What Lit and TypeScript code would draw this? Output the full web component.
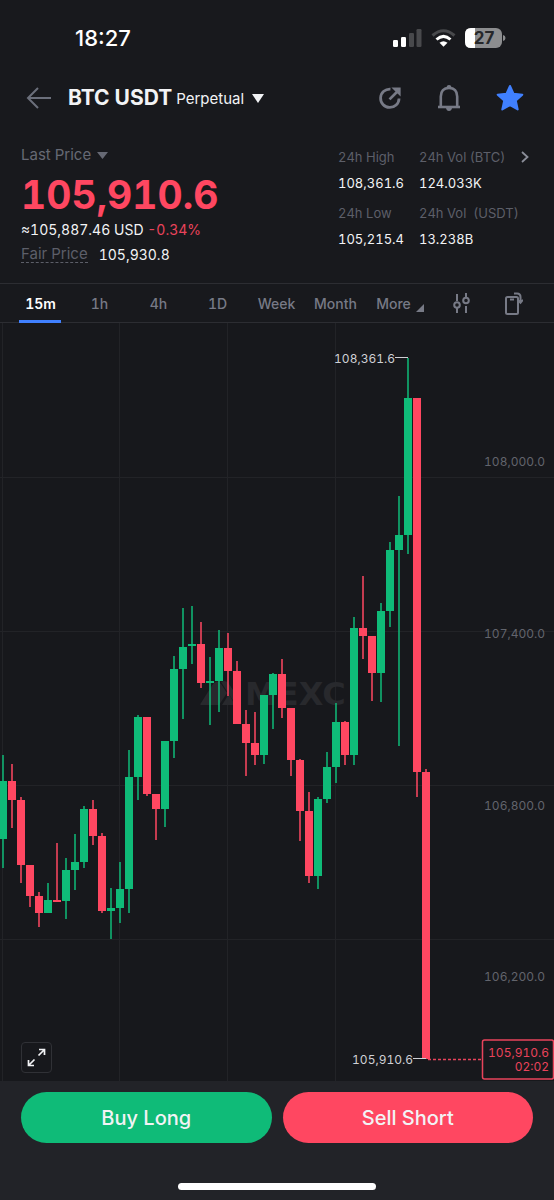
import { LitElement, html, svg, css } from "lit";
import { customElement, state } from "lit/decorators.js";
import { classMap } from "lit/directives/class-map.js";

// [rising, body top, body bottom, wick top, wick bottom] in chart units
type Candle = [number, number, number, number, number];

const CANDLES: Candle[] = [
  [1, 458, 516, 432, 545], [0, 458, 477, 441, 505], [0, 477, 542, 474, 560], [0, 542, 573, 542, 584],
  [0, 573, 590, 569, 604], [1, 577, 590, 560, 590], [0, 577, 579, 520, 579], [1, 547, 578, 535, 596],
  [1, 539, 547, 511, 567], [1, 486, 539, 483, 545], [0, 486, 513, 477, 522], [0, 513, 588, 510, 590],
  [1, 585, 588, 565, 616], [1, 566, 585, 539, 600], [1, 454, 566, 427, 590], [1, 394, 454, 392, 477],
  [0, 394, 471, 394, 473], [0, 471, 486, 471, 517], [1, 418, 486, 418, 504], [1, 346, 418, 333, 435],
  [1, 324, 346, 285, 396], [1, 321, 323, 283, 341], [0, 321, 360, 299, 365], [1, 358, 360, 334, 402],
  [1, 325, 358, 307, 389], [0, 325, 348, 310, 373], [0, 348, 401, 338, 401], [0, 401, 420, 387, 453],
  [0, 420, 432, 389, 442], [1, 372, 432, 372, 441], [1, 351, 372, 350, 406], [0, 351, 385, 336, 395],
  [0, 385, 437, 385, 453], [0, 437, 488, 436, 518], [0, 488, 553, 469, 560], [1, 476, 553, 474, 566],
  [1, 444, 476, 429, 480], [1, 399, 444, 380, 460], [0, 399, 432, 398, 442], [1, 305, 432, 294, 442],
  [0, 305, 313, 253, 336], [0, 313, 350, 313, 378], [1, 288, 350, 280, 379], [1, 227, 288, 219, 304],
  [1, 212, 227, 173, 423], [1, 75, 212, 35, 231], [0, 75, 449, 75, 474], [0, 449, 736, 446, 736],
];

const AXIS = [
  { y: 143, label: "108,000.0" },
  { y: 315, label: "107,400.0" },
  { y: 487, label: "106,800.0" },
  { y: 658, label: "106,200.0" },
];

@customElement("price-chart")
class PriceChart extends LitElement {
  static styles = css`
    :host { display: block; position: relative; background: #17181c; }
    .plot {
      display: block; width: 100%; height: auto;
      font-family: Inter, "Liberation Sans", sans-serif; font-size: 12px; font-variant-numeric: tabular-nums;
    }
    .grid { stroke: #222327; stroke-width: 1; }
    .up { fill: #0fbb78; }
    .down { fill: #ff4761; }
    .axis { fill: #62646c; text-anchor: end; }
    .mark { fill: #cfd0d5; text-anchor: end; }
    .lead { stroke: #cfd0d5; stroke-width: 1; }
    .last-line { stroke: #e9435b; stroke-width: 1.5; stroke-dasharray: 3 2; }
    .tag { fill: #17181c; stroke: #e9435b; stroke-width: 1.5; }
    .tag-text { fill: #e9435b; text-anchor: end; }
    .brand { fill: #28292d; }
    .brand-name { font: 700 32px "DejaVu Sans", sans-serif; }
    .expand {
      position: absolute; left: 21px; bottom: 8px; width: 31px; height: 31px; padding: 0;
      display: grid; place-items: center; background: #17181c;
      border: 1px solid #303136; border-radius: 4px; color: #f2f3f5;
    }
  `;

  render() {
    return html`
      <svg class="plot" viewBox="0 0 554 758" role="img" aria-label="BTC USDT 15 minute candles">
        ${[3, 120, 228, 336].map((x) => svg`<line class="grid" x1=${x - 0.5} x2=${x - 0.5} y1="0" y2="758"></line>`)}
        ${[154, 308, 462, 616].map((y) => svg`<line class="grid" x1="0" x2="554" y1=${y + 0.5} y2=${y + 0.5}></line>`)}
        <g class="brand">
          <path d="M201 380 L213 361 Q217 356 221 361 L227 370 L219 382 H202 Q199 382 201 380Z"></path>
          <path d="M222 382 L229 371 L235 382Z"></path>
          <path d="M221 359 Q226 356 229 361 L241 379 Q242 382 238 382 H236Z"></path>
          <text class="brand-name" x="245" y="382">MEXC</text>
        </g>
        ${CANDLES.map(([up, top, bottom, high, low], i) => {
          const x = 3 + i * 9;
          return svg`<g class=${up ? "up" : "down"}>
            <rect x=${x - 0.75} y=${high} width="1.5" height=${low - high}></rect>
            <rect x=${x - 4} y=${top} width="8" height=${bottom - top}></rect>
          </g>`;
        })}
        ${AXIS.map((a) => svg`<text class="axis" x="545" y=${a.y}>${a.label}</text>`)}
        <text class="mark" x="395" y="40">108,361.6</text>
        <line class="lead" x1="395" x2="408" y1="34.5" y2="34.5"></line>
        <text class="mark" x="413" y="741">105,910.6</text>
        <line class="lead" x1="413" x2="426" y1="735.5" y2="735.5"></line>
        <line class="last-line" x1="428" x2="482" y1="736.5" y2="736.5"></line>
        <rect class="tag" x="482.5" y="717" width="71" height="39" rx="2"></rect>
        <text class="tag-text" x="549" y="734">105,910.6</text>
        <text class="tag-text" x="549" y="748">02:02</text>
      </svg>
      <button class="expand" aria-label="Full screen">
        <svg width="19" height="19" viewBox="0 0 19 19" fill="none" stroke="currentColor" stroke-width="1.7">
          <path d="M11.5 7.500 L17 2 M12 1.500 H17.500 V7 M7.500 11.500 L2 17 M1.500 12 V17.500 H7"></path>
        </svg>
      </button>
    `;
  }
}

@customElement("app-root")
class AppRoot extends LitElement {
  @state() private range = "15m";

  static styles = css`
    :host {
      display: flex; flex-direction: column; min-height: 100vh; background: #18191d; color: #f2f3f5;
      font-family: Inter, "Liberation Sans", sans-serif; font-size: 13px;
    }
    button { font: inherit; color: inherit; background: none; border: 0; padding: 0; margin: 0; cursor: pointer; }
    svg { display: block; }
    .status { display: flex; justify-content: space-between; align-items: center; height: 75px; padding: 0 48px 0 75px; }
    .clock { font-size: 22px; font-weight: 500; line-height: 28px; color: #fff; }
    .signals { display: flex; align-items: center; gap: 9px; }
    .battery-text { font: 700 17px Inter, sans-serif; fill: #26272a; text-anchor: middle; }
    .title { display: flex; align-items: center; height: 46px; padding: 0 30px 0 26px; }
    .back { margin-right: 16px; color: #6b6f7b; }
    .pair { margin: 0; font-size: 21px; font-weight: 700; line-height: 28px; }
    .kind { display: flex; align-items: center; gap: 8px; margin-left: 4px; font-size: 15px; }
    .tools { display: flex; align-items: center; gap: 35px; margin-left: auto; color: #777a86; }
    .tools button { display: block; }
    .summary { display: flex; justify-content: space-between; padding: 24px 21px 17px; font-variant-numeric: tabular-nums; }
    .muted { color: #5d5f69; }
    .last { display: flex; align-items: center; gap: 6px; line-height: 20px; font-size: 15px; color: #666974; }
    .price { margin: 9px 0 2px; font-size: 39px; font-weight: 700; line-height: 42px; color: #ff4761; }
    .line { line-height: 24px; font-size: 14px; }
    .drop { color: #e9435b; }
    .fair { display: flex; align-items: center; gap: 11px; height: 24px; font-size: 14px; }
    .fair-label { line-height: 16px; font-size: 15px; border-bottom: 1px dashed #5d5f69; color: #5d5f69; }
    .stats { display: grid; grid-template-columns: 81px 1fr auto; flex: 0 0 195px; align-content: start; margin: 0; }
    .stat { display: flex; flex-direction: column; gap: 2px; margin-bottom: 6px; line-height: 24px; white-space: nowrap; }
    .more-stats { grid-column: 3; grid-row: 1; align-self: start; height: 24px; margin-right: 4px; color: #8b8e99; }
    .ranges {
      display: grid; grid-template-columns: 59fr 59fr 59fr 59fr 59fr 59fr 70fr 52fr 54fr;
      height: 38px; padding: 0 13px 0 11px; border: 1px solid #2c2d32; border-width: 1px 0; color: #777a86;
      font-size: 14px; font-weight: 500; font-variant-numeric: tabular-nums;
    }
    .ranges button { display: flex; align-items: center; justify-content: center; gap: 5px; position: relative; }
    .ranges .on { color: #fff; font-weight: 600; }
    .on::after { content: ""; position: absolute; left: 8px; right: 9px; bottom: -1px; height: 3px; background: #4080ff; }
    .corner { align-self: flex-end; margin-bottom: 10px; }
    .actions { flex: 1; display: flex; flex-direction: column; justify-content: space-between; padding: 11px 21px 10px; background: #222328; }
    .pair-actions { display: grid; grid-template-columns: 1fr 1fr; gap: 11px; }
    .act { height: 51px; border-radius: 26px; font-size: 20px; font-weight: 500; }
    .buy { background: #0fbb78; }
    .sell { background: #ff4761; }
    .home { width: 198px; height: 7px; margin: 0 auto; border-radius: 4px; background: #fff; }
  `;

  render() {
    const ranges = ["15m", "1h", "4h", "1D", "Week", "Month"];
    return html`
      <div class="status">
        <time class="clock">18:27</time>
        <div class="signals">
          <svg width="29" height="18" viewBox="0 0 29 18" fill="#fff">
            <rect x="0" y="11" width="5" height="7" rx="1.2"></rect>
            <rect x="8" y="8" width="5" height="10" rx="1.2"></rect>
            <rect x="16" y="4" width="5" height="14" rx="1.2" fill="#48494c"></rect>
            <rect x="23.500" y="0" width="5" height="18" rx="1.2" fill="#48494c"></rect>
          </svg>
          <svg width="25" height="18" viewBox="0 0 25 18" fill="none" stroke-width="3">
            <path d="M1.500 6.500 Q12.500 -3 23.500 6.500" stroke="#48494c"></path>
            <path d="M5.500 10.500 Q12.500 4.200 19.500 10.500" stroke="#fff"></path>
            <path d="M8.500 13.800 Q12.500 10.800 16.500 13.800 L12.500 17.700Z" fill="#fff"></path>
          </svg>
          <svg width="41" height="20" viewBox="0 0 41 20">
            <rect x="0" y="0" width="37" height="20" rx="6" fill="#8c8d8f"></rect>
            <path d="M6 0 H10 V20 H6 Q0 20 0 14 V6 Q0 0 6 0Z" fill="#fff"></path>
            <path d="M38 7 Q40.500 7.500 40.500 10 Q40.500 12.500 38 13Z" fill="#8c8d8f"></path>
            <text class="battery-text" x="19" y="16">27</text>
          </svg>
        </div>
      </div>
      <header class="title">
        <button class="back" aria-label="Back">
          <svg width="26" height="24" viewBox="0 0 26 24" fill="none" stroke="currentColor" stroke-width="2">
            <path d="M25 12 H2 M12 2 L2 12 L12 22"></path>
          </svg>
        </button>
        <h1 class="pair">BTC USDT</h1>
        <button class="kind">Perpetual
          <svg width="12" height="9" viewBox="0 0 12 9" fill="currentColor"><path d="M0 0 H12 L6 9Z"></path></svg>
        </button>
        <div class="tools">
          <button aria-label="Share">
            <svg width="24" height="24" viewBox="0 0 26 26" fill="none" stroke="currentColor" stroke-width="3">
              <path d="M13.500 3.300 A10 10 0 1 0 22.800 13.500"></path>
              <path d="M12.500 14.500 L21 6"></path>
              <path d="M14.500 1.500 H24.500 V11.500Z" fill="currentColor" stroke="none"></path>
            </svg>
          </button>
          <button aria-label="Price alert">
            <svg width="24" height="26" viewBox="0 0 24 26" fill="none" stroke="currentColor" stroke-width="2.600">
              <path d="M3.800 21.500 V11.500 Q4 3 12 3 Q20 3 20.200 11.500 V21.500"></path>
              <path d="M1 22 H23"></path>
              <path d="M9.500 3 Q9.500 0 12 0 Q14.500 0 14.500 3Z M9 23 H15 Q14.500 26 12 26 Q9.500 26 9 23Z" fill="currentColor" stroke="none"></path>
            </svg>
          </button>
          <button aria-label="Favourite">
            <svg width="28" height="28" viewBox="0 0 28 28" fill="#4080ff" stroke="#4080ff" stroke-width="2" stroke-linejoin="round">
              <path d="M14 2 L17.600 9.800 L26.300 10.700 L19.800 16.600 L21.700 25.500 L14 21.200 L6.300 25.500 L8.200 16.600 L1.700 10.700 L10.400 9.800Z"></path>
            </svg>
          </button>
        </div>
      </header>
      <section class="summary">
        <div>
          <button class="last">Last Price
            <svg width="11" height="7" viewBox="0 0 11 7" fill="currentColor"><path d="M0 0 H11 L5.500 7Z"></path></svg>
          </button>
          <div class="price">105,910.6</div>
          <div class="line">≈105,887.46 USD <span class="drop">-0.34%</span></div>
          <div class="fair"><span class="fair-label">Fair Price</span><span>105,930.8</span></div>
        </div>
        <div class="stats">
          <div class="stat"><span class="muted">24h High</span><span>108,361.6</span></div>
          <div class="stat"><span class="muted">24h Vol (BTC)</span><span>124.033K</span></div>
          <button class="more-stats" aria-label="More statistics">
            <svg width="8" height="12" viewBox="0 0 8 12" fill="none" stroke="currentColor" stroke-width="1.800"><path d="M1 1 L6.500 6 L1 11"></path></svg>
          </button>
          <div class="stat"><span class="muted">24h Low</span><span>105,215.4</span></div>
          <div class="stat"><span class="muted">24h Vol&nbsp; (USDT)</span><span>13.238B</span></div>
        </div>
      </section>
      <nav class="ranges">
        ${ranges.map((r) => html`
          <button class=${classMap({ on: r === this.range })} @click=${() => (this.range = r)}>${r}</button>`)}
        <button>More
          <svg class="corner" width="8" height="8" viewBox="0 0 8 8" fill="currentColor"><path d="M8 0 V8 H0Z"></path></svg>
        </button>
        <button aria-label="Indicators">
          <svg width="17" height="21" viewBox="0 0 17 21" fill="none" stroke="currentColor" stroke-width="2">
            <path d="M4 1 V8 M4 15 V20 M13 0 V4 M13 13 V20"></path>
            <circle cx="4" cy="12" r="2.800"></circle>
            <circle cx="13" cy="7.500" r="2.800"></circle>
          </svg>
        </button>
        <button aria-label="Rotate chart">
          <svg width="18" height="23" viewBox="0 0 18 23" fill="none" stroke="currentColor" stroke-width="2">
            <rect x="1" y="5" width="12" height="17" rx="1.500"></rect>
            <path d="M5 7.500 H9 M9 1.500 H12 Q15.500 1.500 15.500 5 V10 M12.500 7.800 L15.500 10.800 L18 7.800"></path>
          </svg>
        </button>
      </nav>
      <price-chart></price-chart>
      <footer class="actions">
        <div class="pair-actions">
          <button class="act buy">Buy Long</button>
          <button class="act sell">Sell Short</button>
        </div>
        <div class="home"></div>
      </footer>
    `;
  }
}
